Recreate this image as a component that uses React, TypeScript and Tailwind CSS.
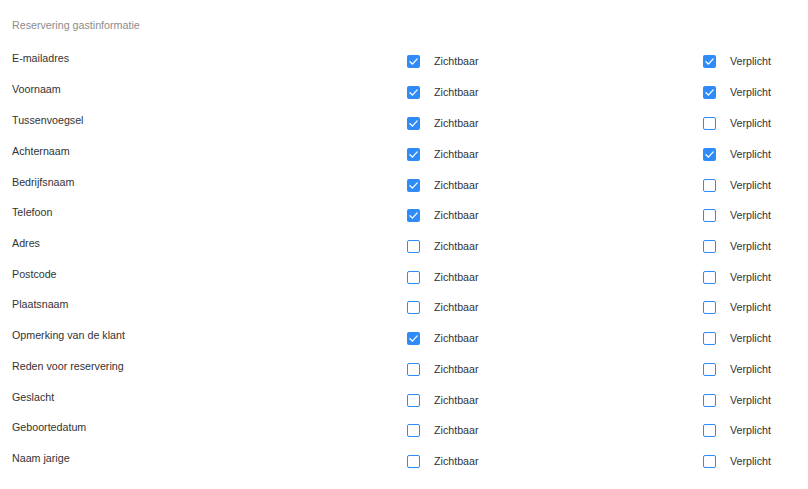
import React from "react";

const rows: [string, boolean, boolean, string][] = [
  ["E-mailadres", true, true, "h-[31px]"],
  ["Voornaam", true, true, "h-[31px]"],
  ["Tussenvoegsel", true, false, "h-[31px]"],
  ["Achternaam", true, true, "h-[31px]"],
  ["Bedrijfsnaam", true, false, "h-[30px]"],
  ["Telefoon", true, false, "h-[31px]"],
  ["Adres", false, false, "h-[31px]"],
  ["Postcode", false, false, "h-[30px]"],
  ["Plaatsnaam", false, false, "h-[31px]"],
  ["Opmerking van de klant", true, false, "h-[31px]"],
  ["Reden voor reservering", false, false, "h-[31px]"],
  ["Geslacht", false, false, "h-[30px]"],
  ["Geboortedatum", false, false, "h-[31px]"],
  ["Naam jarige", false, false, "h-[31px]"],
];

function Box({ checked }: { checked: boolean }) {
  if (checked) {
    return (
      <span className="flex h-[13px] w-[13px] shrink-0 items-center justify-center rounded-[2px] bg-[#2f8bf8]">
        <svg width="13" height="13" viewBox="0 0 13 13" fill="none">
          <path d="M3 6.8 L5.4 9.1 L10.2 3.9" stroke="white" strokeWidth="1.3" strokeLinecap="round" strokeLinejoin="round" />
        </svg>
      </span>
    );
  }
  return <span className="block h-[13px] w-[13px] shrink-0 rounded-[2px] border border-[#2f8bf8] bg-white" />;
}

export default function App() {
  return (
    <div className="min-h-[489px] w-[808px] bg-white px-3 pt-[19px] font-['Liberation_Sans',Arial,sans-serif] text-[10.7px] leading-[13px]">
      <div className="text-[#8c8c8c]">Reservering gastinformatie</div>
      <div className="mt-[20px] flex flex-col">
        {rows.map(([label, vis, req, h]) => (
          <div key={label} className={`grid grid-cols-[395px_296px_1fr] ${h}`}>
            <div className="text-[#333333]">{label}</div>
            <div className="mt-[3px] flex h-[13px] items-center gap-[14px] text-[#333333]">
              <Box checked={vis} />
              <span className="leading-[13px]">Zichtbaar</span>
            </div>
            <div className="mt-[3px] flex h-[13px] items-center gap-[14px] text-[#333333]">
              <Box checked={req} />
              <span className="leading-[13px]">Verplicht</span>
            </div>
          </div>
        ))}
      </div>
    </div>
  );
}
